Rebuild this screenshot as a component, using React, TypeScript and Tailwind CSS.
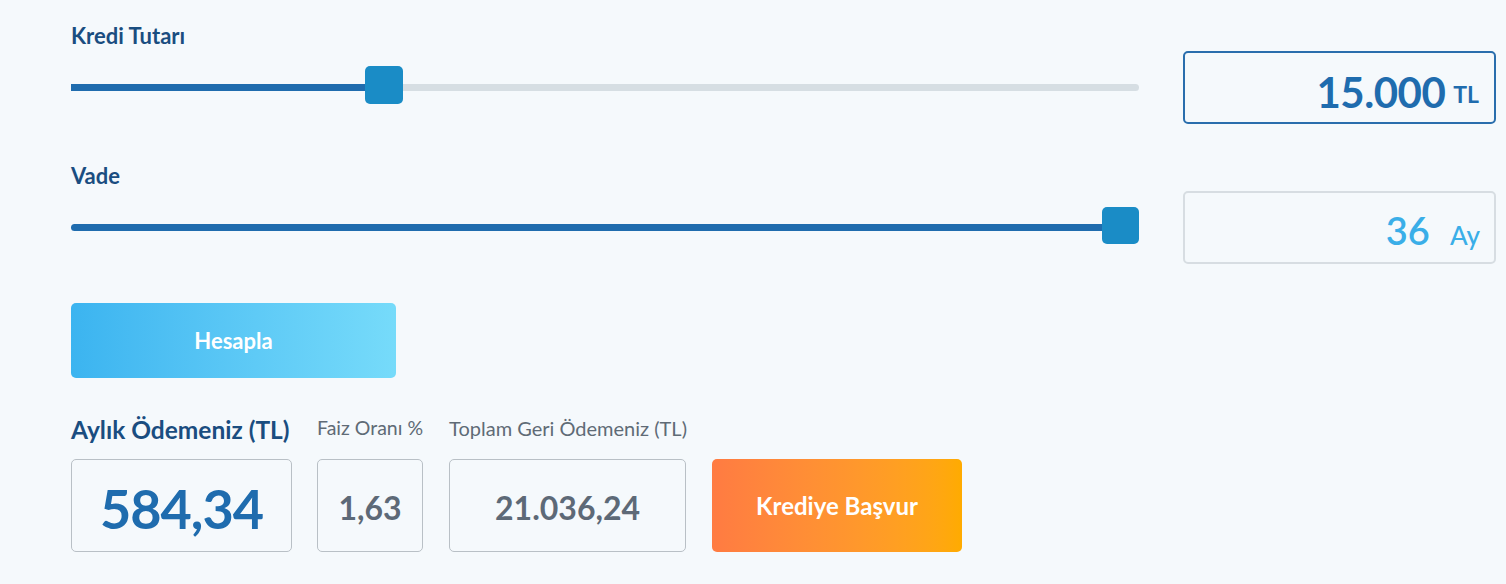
import React from "react";

export default function App() {
  return (
    <div className="w-[1506px] h-[584px] bg-[#f5f9fc] pl-[71px] font-['Lato',sans-serif] overflow-hidden">
      {/* Row 1 */}
      <div className="flex items-start gap-[44px] pt-[23px]">
        <div className="w-[1068px]">
          <div className="text-[22px] leading-[26px] font-bold text-[#1a4d80]">Kredi Tutarı</div>
          <div className="relative h-[38px] mt-[17px]">
            <div className="absolute left-0 right-0 top-[18px] h-[7px] rounded-full bg-[#d6dee3]" />
            <div className="absolute left-0 top-[18px] h-[7px] w-[300px] bg-[#1f6cae]" />
            <div className="absolute left-[294px] top-0 w-[38px] h-[38px] rounded-[5px] bg-[#1a8cc6]" />
          </div>
        </div>
        <div className="mt-[28px] w-[313px] h-[73px] rounded-[5px] border-2 border-[#2a6ead] flex items-center justify-end pr-[15px] pt-[8px]">
          <div className="flex items-baseline gap-[8px] text-[#1f6cae] font-bold">
            <span className="text-[42px] leading-none tracking-[-0.5px]">15.000</span>
            <span className="relative -top-[5px] text-[23px] leading-none">TL</span>
          </div>
        </div>
      </div>

      {/* Row 2 */}
      <div className="flex items-start gap-[44px] mt-[39px]">
        <div className="w-[1068px]">
          <div className="text-[22px] leading-[26px] font-bold text-[#1a4d80]">Vade</div>
          <div className="relative h-[38px] mt-[18px]">
            <div className="absolute left-0 right-0 top-[17px] h-[7px] rounded-full bg-[#1f6cae]" />
            <div className="absolute right-0 top-0 w-[37px] h-[37px] rounded-[5px] bg-[#1a8cc6]" />
          </div>
        </div>
        <div className="mt-[28px] w-[313px] h-[73px] rounded-[5px] border-2 border-[#d7dde2] flex items-center justify-end pr-[14px] pt-[5px]">
          <div className="flex items-baseline gap-[20px] text-[#3aaee8]">
            <span className="text-[38px] leading-none font-semibold">36</span>
            <span className="text-[26px] leading-none font-medium">Ay</span>
          </div>
        </div>
      </div>

      {/* Hesapla */}
      <div className="mt-[39px] w-[325px] h-[75px] rounded-[5px] bg-gradient-to-r from-[#3bb4f0] to-[#76dbfa] flex items-center justify-center">
        <span className="text-white text-[22px] font-bold leading-none">Hesapla</span>
      </div>

      {/* Results */}
      <div className="flex items-end mt-[38px]">
        <div className="flex flex-col">
          <div className="h-[43px] text-[24.5px] leading-[28px] font-bold text-[#1a4d80] whitespace-nowrap">Aylık Ödemeniz (TL)</div>
          <div className="w-[221px] h-[93px] rounded-[5px] border border-[#b9c0c6] flex items-center justify-center pt-[6px]">
            <span className="text-[54px] leading-none font-bold tracking-[-1px] text-[#1f6cae]">584,34</span>
          </div>
        </div>
        <div className="flex flex-col ml-[25px]">
          <div className="h-[43px] text-[19.5px] leading-[24px] text-[#5f6b76] whitespace-nowrap">Faiz Oranı %</div>
          <div className="w-[106px] h-[93px] rounded-[5px] border border-[#b9c0c6] flex items-center justify-center pt-[4px]">
            <span className="text-[32px] leading-none font-bold text-[#5d6977]">1,63</span>
          </div>
        </div>
        <div className="flex flex-col ml-[26px]">
          <div className="h-[43px] text-[20px] leading-[24px] text-[#5f6b76] whitespace-nowrap">Toplam Geri Ödemeniz (TL)</div>
          <div className="w-[237px] h-[93px] rounded-[5px] border border-[#b9c0c6] flex items-center justify-center pt-[4px]">
            <span className="text-[32px] leading-none font-bold text-[#5d6977]">21.036,24</span>
          </div>
        </div>
        <div className="ml-[25px] w-[250px] h-[93px] rounded-[5px] bg-gradient-to-r from-[#ff7b42] to-[#ffab00] flex items-center justify-center">
          <span className="text-white text-[24px] font-bold leading-none">Krediye Başvur</span>
        </div>
      </div>
    </div>
  );
}
